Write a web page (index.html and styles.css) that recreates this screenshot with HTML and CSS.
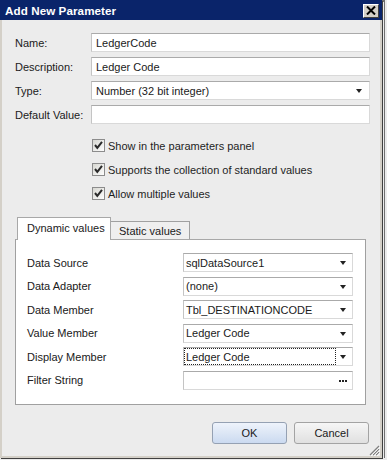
FILE: index.html
```html
<!DOCTYPE html>
<html>
<head>
<meta charset="utf-8">
<link rel="stylesheet" href="styles.css">
</head>
<body>
<div class="screen">
  <div class="dialog">
    <div class="titlebar">
      <span class="title">Add New Parameter</span>
      <span class="close"><svg width="10" height="9" viewBox="0 0 10 9"><path d="M1 0.5 L9 8.5 M9 0.5 L1 8.5" stroke="#000" stroke-width="2" fill="none"/></svg></span>
    </div>
    <div class="body">
      <div class="form">
        <label class="lbl">Name:</label>
        <div class="field">LedgerCode</div>
        <label class="lbl">Description:</label>
        <div class="field">Ledger Code</div>
        <label class="lbl">Type:</label>
        <div class="field combo wide">Number (32 bit integer)<span class="arrow"></span></div>
        <label class="lbl">Default Value:</label>
        <div class="field"></div>
      </div>
      <div class="checks">
        <div class="check"><svg class="cb" width="13" height="13" viewBox="0 0 13 13"><defs><linearGradient id="g1" x1="0" y1="0" x2="1" y2="1"><stop offset="0" stop-color="#d6d6d0"/><stop offset="1" stop-color="#ffffff"/></linearGradient></defs><rect x="0.5" y="0.5" width="12" height="12" fill="url(#g1)" stroke="#8c8c8c"/><path d="M3 6 L5.3 8.8 L10 2.8" stroke="#2a2a2a" stroke-width="2" fill="none"/></svg><span>Show in the parameters panel</span></div>
        <div class="check"><svg class="cb" width="13" height="13" viewBox="0 0 13 13"><rect x="0.5" y="0.5" width="12" height="12" fill="url(#g1)" stroke="#8c8c8c"/><path d="M3 6 L5.3 8.8 L10 2.8" stroke="#2a2a2a" stroke-width="2" fill="none"/></svg><span>Supports the collection of standard values</span></div>
        <div class="check"><svg class="cb" width="13" height="13" viewBox="0 0 13 13"><rect x="0.5" y="0.5" width="12" height="12" fill="url(#g1)" stroke="#8c8c8c"/><path d="M3 6 L5.3 8.8 L10 2.8" stroke="#2a2a2a" stroke-width="2" fill="none"/></svg><span>Allow multiple values</span></div>
      </div>
      <div class="tabs">
        <div class="tab active">Dynamic values</div>
        <div class="tab">Static values</div>
      </div>
      <div class="panel">
        <div class="prow"><span class="plbl">Data Source</span><div class="field combo">sqlDataSource1<span class="arrow"></span></div></div>
        <div class="prow"><span class="plbl">Data Adapter</span><div class="field combo">(none)<span class="arrow"></span></div></div>
        <div class="prow"><span class="plbl">Data Member</span><div class="field combo">Tbl_DESTINATIONCODE<span class="arrow"></span></div></div>
        <div class="prow"><span class="plbl">Value Member</span><div class="field combo">Ledger Code<span class="arrow"></span></div></div>
        <div class="prow"><span class="plbl">Display Member</span><div class="field combo focus"><span class="focusrect">Ledger Code</span><span class="arrow"></span></div></div>
        <div class="prow"><span class="plbl">Filter String</span><div class="field combo"><span class="dots"><i></i><i></i><i></i></span></div></div>
      </div>
      <div class="buttons">
        <div class="btn ok">OK</div>
        <div class="btn">Cancel</div>
      </div>
    </div>
    <svg class="grip" width="12" height="12" viewBox="0 0 12 12"><path d="M11 2 L2 11 M11 5 L5 11 M11 8 L8 11" stroke="#808080" stroke-width="1.2"/><path d="M12 3 L3 12 M12 6 L6 12 M12 9 L9 12" stroke="#ffffff" stroke-width="0.8"/></svg>
  </div>
</div>
</body>
</html>
```
FILE: styles.css
```css
html, body {
  margin: 0;
  padding: 0;
}
body {
  font-family: "Liberation Sans", Arial, sans-serif;
  font-size: 11px;
  color: #1e1e1e;
}
.screen {
  width: 387px;
  height: 460px;
  background: #ececec;
  display: flex;
  align-items: flex-start;
  overflow: hidden;
}
.dialog {
  position: relative;
  width: 382px;
  height: 458px;
  box-sizing: border-box;
  background: #ececec;
  border-left: 2px solid #d4d0c8;
  border-right: 2px solid #d4d0c8;
  border-bottom: 2px solid #d4d0c8;
  box-shadow: 1px 1px 0 #404040, 2px 2px 0 #ececec, 3px 0 0 #707070;
  display: flex;
  flex-direction: column;
}
.titlebar {
  height: 20px;
  margin: 0 -2px;
  background: #0a246a;
  display: flex;
  align-items: center;
  justify-content: space-between;
  padding: 0 3px 0 5px;
}
.title {
  color: #fff;
  font-weight: bold;
  font-size: 11.6px;
  letter-spacing: 0.1px;
}
.close {
  width: 16px;
  height: 14px;
  box-sizing: border-box;
  background: #d4d0c8;
  border-top: 1px solid #fff;
  border-left: 1px solid #fff;
  border-right: 1px solid #404040;
  border-bottom: 1px solid #404040;
  display: flex;
  align-items: center;
  justify-content: center;
  margin-top: 1px;
}
.body {
  padding: 13px 10px 0 13px;
  display: flex;
  flex-direction: column;
}
.form {
  display: grid;
  grid-template-columns: 76px 279px;
  grid-auto-rows: 19px;
  row-gap: 5px;
  align-items: center;
}
.lbl {
  color: #202020;
}
.field {
  height: 19px;
  box-sizing: border-box;
  background: #fff;
  border: 1px solid #d9d9d9;
  border-top-color: #aaaaaa;
  border-left-color: #c4c4c4;
  padding-left: 4px;
  display: flex;
  align-items: center;
  position: relative;
  color: #1a1a1a;
  white-space: nowrap;
}
.arrow {
  position: absolute;
  right: 6px;
  top: 7px;
  width: 0;
  height: 0;
  border-left: 3.5px solid transparent;
  border-right: 3.5px solid transparent;
  border-top: 4px solid #222;
}
.wide .arrow {
  right: 7px;
}
.checks {
  margin-top: 15px;
  margin-left: 77px;
  display: flex;
  flex-direction: column;
  gap: 11px;
}
.check {
  display: flex;
  align-items: center;
  height: 13px;
  gap: 3px;
}
.cb {
  flex: none;
}
.tabs {
  margin-top: 16px;
  margin-left: 2px;
  display: flex;
  align-items: flex-end;
  height: 23px;
  position: relative;
  z-index: 1;
}
.tab {
  height: 18px;
  box-sizing: border-box;
  border: 1px solid #a0a0a0;
  border-bottom: none;
  background: #efefef;
  display: flex;
  align-items: center;
  color: #202020;
  white-space: nowrap;
  flex: none;
}
.tab.active {
  height: 23px;
  background: #fff;
  width: 94px;
  padding: 0 0 2px 9px;
  border-color: #a8a8a8;
  margin-bottom: -1px;
}
.tab:not(.active) {
  border-left: none;
  width: 79px;
  padding-left: 8px;
}
.panel {
  width: 351px;
  margin-left: 0;
  box-sizing: border-box;
  background: #fff;
  border: 1px solid #a0a0a0;
  border-top-color: #a8a8a8;
  padding: 13px 12px 14px 11px;
  display: flex;
  flex-direction: column;
  gap: 4.6px;
}
.prow {
  display: flex;
  align-items: center;
  justify-content: space-between;
  height: 19px;
}
.plbl {
  color: #202020;
}
.prow .field {
  width: 170px;
  padding-left: 2px;
}
.focusrect {
  outline: 1px dotted #222;
  height: 15px;
  width: 149px;
  display: flex;
  align-items: center;
  margin-left: -1px;
  padding-left: 1px;
}
.dots {
  position: absolute;
  right: 5px;
  top: 8px;
  display: flex;
  gap: 1px;
}
.dots i {
  display: block;
  width: 2px;
  height: 2px;
  background: #222;
}
.buttons {
  margin-top: 17px;
  display: flex;
  justify-content: flex-end;
  gap: 7px;
  padding-right: 1px;
}
.btn {
  width: 75px;
  height: 22px;
  box-sizing: border-box;
  border: 1px solid #a3a3a3;
  border-radius: 3px;
  background: linear-gradient(#f6f6f6, #e0e0e0);
  display: flex;
  align-items: center;
  justify-content: center;
  color: #1a1a1a;
}
.btn.ok {
  border-color: #95a1b3;
  background: linear-gradient(#eef3fb, #cbdaf0);
}
.grip {
  position: absolute;
  right: 0;
  bottom: 0;
}
```
